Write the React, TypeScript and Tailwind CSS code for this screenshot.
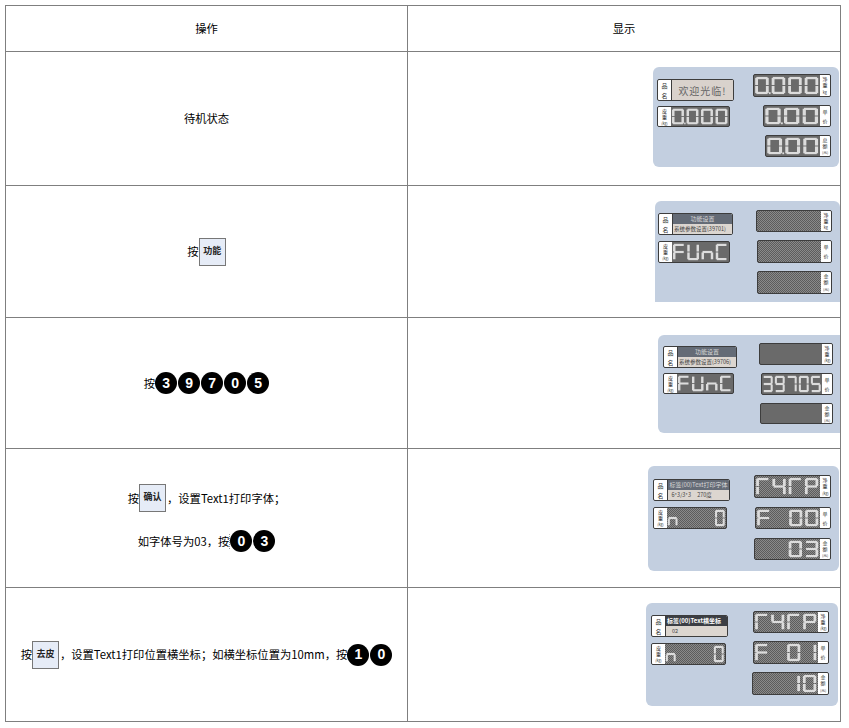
const font = "font-['Noto_Sans_CJK_SC','Liberation_Sans',sans-serif]";

const SEGMENTS: Record<string, string> = {
  "0": "abcdef",
  "1": "bc",
  "3": "abcdg",
  "4": "bcfg",
  "5": "acdfg",
  "7": "abc",
  "9": "abcdfg",
  F: "aefg",
  U: "bcdef",
  n: "ceg",
  C: "adef",
  r: "aef",
  P: "abefg",
  " ": "",
};

// seven segment read-out of the scale, one cell per character
const SegText = ({ text }: { text: string }) => {
  const cells: { ch: string; dot: boolean }[] = [];
  for (const ch of text) {
    if (ch === ".") cells[cells.length - 1].dot = true;
    else cells.push({ ch, dot: false });
  }
  const cw = 14;
  return (
    <svg
      viewBox={`0 0 ${cells.length * cw} 22`}
      preserveAspectRatio="none"
      className="block h-full min-w-0 flex-1"
    >
      {cells.map((c, i) => {
        const x = i * cw + 1;
        const on = SEGMENTS[c.ch] ?? "";
        const t = 2.4;
        const w = 11.5;
        const rects: Record<string, number[]> = {
          a: [x + 1, 2, w - 2, t],
          b: [x + w - t, 3, t, 7.5],
          c: [x + w - t, 11.5, t, 7.5],
          d: [x + 1, 17.6, w - 2, t],
          e: [x, 11.5, t, 7.5],
          f: [x, 3, t, 7.5],
          g: [x + 1, 9.8, w - 2, t],
        };
        return (
          <g key={i} fill="#dcdcdc">
            {on.split("").map((s) => (
              <rect key={s} x={rects[s][0]} y={rects[s][1]} width={rects[s][2]} height={rects[s][3]} />
            ))}
            {c.dot && <rect x={x + w + 0.2} y={18} width={1.4} height={2} />}
          </g>
        );
      })}
    </svg>
  );
};

const Tab = ({ top, mid, unit, wide }: { top: string; mid: string; unit?: string; wide?: boolean }) => (
  <div className={`flex shrink-0 flex-col items-center justify-around bg-white py-[1px] text-[5px] leading-[6px] text-[#333] ${wide ? "w-[13px]" : "w-[10px]"}`}>
    <span>{top}</span>
    <span>{mid}</span>
    {unit && <span className="scale-75 whitespace-nowrap">{unit}</span>}
  </div>
);

type ReadoutProps = {
  size: string;
  text?: string;
  top: string;
  mid: string;
  unit?: string;
  left?: boolean;
  speckle?: boolean;
};

const Readout = ({ size, text, top, mid, unit, left, speckle }: ReadoutProps) => (
  <div
    className={`flex overflow-hidden rounded-[2px] border border-[#3d3d3d] ${size} ${
      speckle
        ? "bg-[repeating-conic-gradient(#8a8a8a_0_25%,#5c5c5c_0_50%)] bg-[length:2px_2px]"
        : "bg-[#6a6a6a]"
    }`}
  >
    {left && <Tab wide top={top} mid={mid} unit={unit} />}
    {text ? <SegText text={text} /> : <div className="flex-1" />}
    {!left && <Tab top={top} mid={mid} unit={unit} />}
  </div>
);

const NameBox = ({ size, children }: { size: string; children: React.ReactNode }) => (
  <div className={`flex overflow-hidden rounded-[2px] border border-[#3d3d3d] bg-white ${size}`}>
    <div className="flex w-[13px] shrink-0 flex-col items-center justify-around text-[6px] leading-[7px] text-[#333]">
      <span>品</span>
      <span>名</span>
    </div>
    {children}
  </div>
);

const TwoLine = ({ top, bottom, dark }: { top: string; bottom: string; dark?: boolean }) => (
  <div className="flex min-w-0 flex-1 flex-col border-l border-[#3d3d3d] text-[6px] leading-[10px]">
    <div className={`h-[10px] overflow-hidden whitespace-nowrap px-[1px] ${dark ? "bg-[#3b3e44] font-bold text-white" : "bg-[#646b76] text-center text-[#d8d8d8]"}`}>
      {top}
    </div>
    <div className="flex-1 overflow-hidden whitespace-pre bg-[#dcd6d0] px-[1px] text-[5.5px] text-[#444]">{bottom}</div>
  </div>
);

const Key = ({ label }: { label: string }) => (
  <span className="flex h-[28px] w-[27px] shrink-0 items-center justify-center border border-[#777777] bg-[#e6ecf7] font-['Liberation_Serif','Noto_Sans_CJK_SC',serif] text-[9px] font-bold text-[#222]">
    {label}
  </span>
);

const Digits = ({ list }: { list: string[] }) => (
  <span className="flex gap-[1px]">
    {list.map((d, i) => (
      <span
        key={i}
        className="flex h-[22px] w-[22px] items-center justify-center rounded-full bg-black font-['Liberation_Sans',sans-serif] text-[14px] font-bold text-white"
      >
        {d}
      </span>
    ))}
  </span>
);

const Line = ({ children }: { children: React.ReactNode }) => (
  <div className="flex items-center justify-center whitespace-nowrap">{children}</div>
);

const Cell = ({ children }: { children: React.ReactNode }) => (
  <td className="border border-[#7f7f7f] p-0 text-center align-middle text-[11.3px] text-black">{children}</td>
);

const Panel = ({ cls, children }: { cls: string; children: React.ReactNode }) => (
  <td className="border border-[#7f7f7f] p-0 align-top">
    <div className="flex justify-end">
      <div className={`flex justify-between bg-[#c3cfe0] ${cls}`}>{children}</div>
    </div>
  </td>
);

const App = () => {
  return (
    <div className={`h-[728px] w-[849px] overflow-hidden bg-white pl-[5px] pt-[5px] ${font}`}>
      <table className="w-[836px] table-fixed border-collapse">
        <colgroup>
          <col className="w-[402px]" />
          <col className="w-[433px]" />
        </colgroup>
        <tbody>
          <tr className="h-[46px]">
            <Cell>操作</Cell>
            <Cell>显示</Cell>
          </tr>

          <tr className="h-[134px]">
            <Cell>待机状态</Cell>
            <Panel cls="mr-[1px] mt-[15px] h-[100px] w-[186px] rounded-md pl-[4px] pr-[8px]">
              <div className="flex flex-col gap-[5px] pt-[12px]">
                <NameBox size="h-[22px] w-[77px]">
                  <div className="flex flex-1 items-center justify-center border-l border-[#3d3d3d] bg-[#d9d2cc] text-[10px] tracking-[1px] text-[#666666]">
                    欢迎光临!
                  </div>
                </NameBox>
                <Readout left size="h-[21px] w-[73px]" text="0.000" top="皮" mid="重" unit="(kg)" />
              </div>
              <div className="flex flex-col items-end gap-[8px] pt-[7px]">
                <Readout size="h-[23px] w-[78px]" text="0.000" top="净" mid="重" unit="kg" />
                <Readout size="h-[22px] w-[68px]" text="0.00" top="单" mid="价" />
                <Readout size="h-[22px] w-[66px]" text="0.00" top="总" mid="额" unit="(元)" />
              </div>
            </Panel>
          </tr>

          <tr className="h-[132px]">
            <Cell>
              <Line>
                按<Key label="功能" />
              </Line>
            </Cell>
            <Panel cls="mt-[15px] h-[101px] w-[185px] rounded-t-md pl-[3px] pr-[8px]">
              <div className="flex flex-col gap-[6px] pt-[12px]">
                <NameBox size="h-[22px] w-[75px]">
                  <TwoLine top="功能设置" bottom="系统参数设置(39701)" />
                </NameBox>
                <Readout left size="h-[22px] w-[72px]" text="FUnC" top="皮" mid="重" unit="(kg)" />
              </div>
              <div className="flex flex-col items-end gap-[8px] pt-[9px]">
                <Readout speckle size="h-[22px] w-[76px]" top="净" mid="重" unit="kg" />
                <Readout speckle size="h-[23px] w-[75px]" top="单" mid="价" />
                <Readout speckle size="h-[23px] w-[75px]" top="金" mid="额" unit="(元)" />
              </div>
            </Panel>
          </tr>

          <tr className="h-[131px]">
            <Cell>
              <Line>
                按<Digits list={["3", "9", "7", "0", "5"]} />
              </Line>
            </Cell>
            <Panel cls="mt-[17px] h-[98px] w-[182px] rounded-l-md pl-[5px] pr-[7px]">
              <div className="flex flex-col gap-[5px] pt-[11px]">
                <NameBox size="h-[22px] w-[74px]">
                  <TwoLine top="功能设置" bottom="系统参数设置(39706)" />
                </NameBox>
                <Readout left size="h-[21px] w-[71px]" text="FUnC" top="皮" mid="重" unit="(kg)" />
              </div>
              <div className="flex flex-col items-end gap-[8px] pt-[8px]">
                <Readout size="h-[22px] w-[74px]" top="净" mid="重" unit="(kg)" />
                <Readout size="h-[22px] w-[72px]" text="39705" top="单" mid="价" />
                <Readout size="h-[21px] w-[73px]" top="金" mid="额" unit="(元)" />
              </div>
            </Panel>
          </tr>

          <tr className="h-[139px]">
            <Cell>
              <div className="flex flex-col items-center gap-[18px]">
                <Line>
                  按<Key label="确认" />
                  <span className="ml-[1px]">，设置Text1打印字体；</span>
                </Line>
                <Line>
                  如字体号为03，按
                  <span className="h-[15px] border-l border-dotted border-[#999999]" />
                  <Digits list={["0", "3"]} />
                </Line>
              </div>
            </Cell>
            <Panel cls="mr-[1px] mt-[17px] h-[105px] w-[191px] rounded-md pl-[5px] pr-[8px]">
              <div className="flex flex-col gap-[6px] pt-[13px]">
                <NameBox size="h-[22px] w-[77px]">
                  <TwoLine top="标签(00)Text打印字体" bottom="  6*3/3*3     270度" />
                </NameBox>
                <Readout left speckle size="h-[22px] w-[74px]" text="n   0" top="皮" mid="重" unit="(kg)" />
              </div>
              <div className="flex flex-col items-end gap-[9px] pt-[9px]">
                <Readout speckle size="h-[23px] w-[77px]" text="r4rP" top="净" mid="重" unit="(kg)" />
                <Readout speckle size="h-[22px] w-[76px]" text="F 00" top="单" mid="价" />
                <Readout speckle size="h-[22px] w-[77px]" text="  03" top="金" mid="额" unit="(元)" />
              </div>
            </Panel>
          </tr>

          <tr className="h-[134px]">
            <Cell>
              <Line>
                按<Key label="去皮" />
                <span className="ml-[1px]">，设置Text1打印位置横坐标；如横坐标位置为10mm，按</span>
                <Digits list={["1", "0"]} />
              </Line>
            </Cell>
            <Panel cls="mr-[2px] mt-[15px] h-[103px] w-[192px] rounded-md pl-[5px] pr-[9px]">
              <div className="flex flex-col gap-[6px] pt-[12px]">
                <NameBox size="h-[22px] w-[77px]">
                  <TwoLine dark top="标签(00)Text横坐标" bottom="    02" />
                </NameBox>
                <Readout left speckle size="h-[22px] w-[75px]" text="n   0" top="皮" mid="重" unit="(kg)" />
              </div>
              <div className="flex flex-col items-end gap-[8px] pt-[8px]">
                <Readout speckle size="h-[22px] w-[76px]" text="r4rP" top="净" mid="重" unit="(kg)" />
                <Readout speckle size="h-[23px] w-[76px]" text="F 01" top="单" mid="价" />
                <Readout speckle size="h-[23px] w-[77px]" text="  10" top="金" mid="额" unit="(元)" />
              </div>
            </Panel>
          </tr>
        </tbody>
      </table>
    </div>
  );
};

export default App;
